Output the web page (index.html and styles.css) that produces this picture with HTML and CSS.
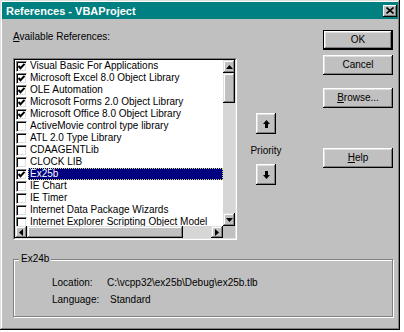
FILE: index.html
```html
<!DOCTYPE html>
<html lang="en">
<head>
    <meta charset="UTF-8">
    <title>References - VBAProject</title>
    <link rel="stylesheet" href="styles.css">
</head>
<body>
    <div class="window">
        <div class="titlebar">
            <span class="title">References - VBAProject</span>
            <button class="close">
                <svg width="8" height="7" viewBox="0 0 8 7"><path d="M0.5 0.5 L7.5 6.5 M7.5 0.5 L0.5 6.5" stroke="#000" stroke-width="1.6"/></svg>
            </button>
        </div>

        <div class="main">
            <div class="left">
                <div class="caption"><u>A</u>vailable References:</div>
                <div class="listbox">
                    <div class="listbox-inner">
                        <div class="items">
                            <div class="item"><span class="check on"></span><span class="label">Visual Basic For Applications</span></div>
                            <div class="item"><span class="check on"></span><span class="label">Microsoft Excel 8.0 Object Library</span></div>
                            <div class="item"><span class="check on"></span><span class="label">OLE Automation</span></div>
                            <div class="item"><span class="check on"></span><span class="label">Microsoft Forms 2.0 Object Library</span></div>
                            <div class="item"><span class="check on"></span><span class="label">Microsoft Office 8.0 Object Library</span></div>
                            <div class="item"><span class="check"></span><span class="label">ActiveMovie control type library</span></div>
                            <div class="item"><span class="check"></span><span class="label">ATL 2.0 Type Library</span></div>
                            <div class="item"><span class="check"></span><span class="label">CDAAGENTLib</span></div>
                            <div class="item"><span class="check"></span><span class="label">CLOCK LIB</span></div>
                            <div class="item selected"><span class="check on"></span><span class="label">Ex25b</span></div>
                            <div class="item"><span class="check"></span><span class="label">IE Chart</span></div>
                            <div class="item"><span class="check"></span><span class="label">IE Timer</span></div>
                            <div class="item"><span class="check"></span><span class="label">Internet Data Package Wizards</span></div>
                            <div class="item"><span class="check"></span><span class="label">Internet Explorer Scripting Object Model</span></div>
                        </div>
                        <div class="vscroll">
                            <div class="sbtn"><svg width="7" height="4" viewBox="0 0 7 4"><path d="M3.5 0 L7 4 L0 4 Z"/></svg></div>
                            <div class="thumb vthumb"></div>
                            <div class="trough"></div>
                            <div class="sbtn"><svg width="7" height="4" viewBox="0 0 7 4"><path d="M0 0 L7 0 L3.5 4 Z"/></svg></div>
                        </div>
                        <div class="hscroll">
                            <div class="sbtn"><svg width="4" height="7" viewBox="0 0 4 7"><path d="M4 0 L4 7 L0 3.5 Z"/></svg></div>
                            <div class="thumb hthumb"></div>
                            <div class="trough"></div>
                            <div class="sbtn"><svg width="4" height="7" viewBox="0 0 4 7"><path d="M0 0 L4 3.5 L0 7 Z"/></svg></div>
                        </div>
                        <div class="corner"></div>
                    </div>
                </div>
            </div>

            <div class="priority">
                <button class="btn arrow-btn">
                    <svg width="7" height="8" viewBox="0 0 7 8"><path d="M3.5 0 L7 4 L5 4 L5 8 L2 8 L2 4 L0 4 Z"/></svg>
                </button>
                <div class="priority-label">Priority</div>
                <button class="btn arrow-btn">
                    <svg width="7" height="8" viewBox="0 0 7 8"><path d="M2 0 L5 0 L5 4 L7 4 L3.5 8 L0 4 L2 4 Z"/></svg>
                </button>
            </div>

            <div class="buttons">
                <button class="btn default">OK</button>
                <button class="btn cancel">Cancel</button>
                <button class="btn browse"><u>B</u>rowse...</button>
                <button class="btn help"><u>H</u>elp</button>
            </div>
        </div>

        <fieldset class="group">
            <legend>Ex24b</legend>
            <div class="details">
                <span>Location:</span><span>C:\vcpp32\ex25b\Debug\ex25b.tlb</span>
                <span>Language:</span><span class="lang">Standard</span>
            </div>
        </fieldset>
    </div>
</body>
</html>
```

FILE: styles.css
```css
* {
    box-sizing: border-box;
}
body {
    margin: 0;
    background: #fff;
    font-family: 'Liberation Sans', Arial, sans-serif;
    font-size: 10px;
    line-height: 12px;
    color: #000;
}
.window {
    width: 400px;
    height: 330px;
    padding: 2px;
    background: #c0c0c0;
    box-shadow: inset -1px -1px #000, inset 1px 1px #dfdfdf, inset -2px -2px #808080, inset 2px 2px #fff;
}
.titlebar {
    height: 17px;
    background: #008080;
    display: flex;
    align-items: center;
    padding: 0 1px 0 4px;
}
.title {
    flex: 1;
    color: #fff;
    font-weight: bold;
    font-size: 11px;
}
.close {
    width: 14px;
    height: 12px;
    padding: 0;
    border: none;
    background: #c0c0c0;
    display: flex;
    align-items: center;
    justify-content: center;
    box-shadow: inset -1px -1px #000, inset 1px 1px #fff, inset -2px -2px #808080;
}
.main {
    display: flex;
    padding: 11px 5px 0 11px;
}
.left {
    width: 224px;
}
.caption {
    margin-top: 1px;
}
.listbox {
    margin-top: 15px;
    height: 182px;
    border: 1px solid;
    border-color: #808080 #fff #fff #808080;
}
.listbox-inner {
    height: 100%;
    border: 1px solid;
    border-color: #000 #dfdfdf #dfdfdf #000;
    display: grid;
    grid-template-columns: 208px 12px;
    grid-template-rows: 166px 12px;
}
.items {
    background: #fff;
    overflow: hidden;
}
.item {
    display: flex;
    align-items: center;
    height: 12px;
    white-space: nowrap;
}
.check {
    width: 11px;
    height: 11px;
    margin: 0 1px 0 1px;
    flex: none;
    background: #fff;
    border: 1px solid;
    border-color: #808080 #fff #fff #808080;
    box-shadow: inset 1px 1px #000, inset -1px -1px #dfdfdf;
}
.check.on {
    background: #fff url("data:image/svg+xml,%3Csvg xmlns='http://www.w3.org/2000/svg' width='9' height='9' viewBox='0 0 9 9'%3E%3Cpath d='M1.5 4 L3.5 6.2 L7.5 1.8' fill='none' stroke='%23000' stroke-width='2'/%3E%3C/svg%3E") center / 9px 9px no-repeat;
}
.label {
    flex: 1;
    padding-left: 2px;
    height: 12px;
}
.selected .label {
    background: #000080;
    color: #fff;
    outline: 1px dotted #d8d870;
    outline-offset: -1px;
}
.vscroll {
    display: flex;
    flex-direction: column;
}
.hscroll {
    display: flex;
}
.sbtn {
    width: 12px;
    height: 12px;
    flex: none;
    display: flex;
    align-items: center;
    justify-content: center;
    background: #c0c0c0;
    box-shadow: inset -1px -1px #000, inset 1px 1px #dfdfdf, inset -2px -2px #808080, inset 2px 2px #fff;
}
.vscroll .sbtn {
    height: 13px;
}
.thumb {
    flex: none;
    background: #c0c0c0;
    box-shadow: inset -1px -1px #000, inset 1px 1px #dfdfdf, inset -2px -2px #808080, inset 2px 2px #fff;
}
.vthumb {
    height: 30px;
}
.hthumb {
    width: 156px;
}
.trough {
    flex: 1;
    background: #d6d6d6;
}
.corner {
    background: #c0c0c0;
}
.priority {
    width: 40px;
    margin-left: 9px;
    padding-top: 83px;
    display: flex;
    flex-direction: column;
    align-items: center;
}
.priority-label {
    margin: 11px 0 7px;
}
.btn {
    font-family: inherit;
    font-size: 10px;
    line-height: 12px;
    color: #000;
    background: #c0c0c0;
    border: none;
    padding: 0;
    box-shadow: inset -1px -1px #000, inset 1px 1px #fff, inset -2px -2px #808080, inset 2px 2px #dfdfdf;
}
.arrow-btn {
    width: 20px;
    height: 21px;
    display: flex;
    align-items: center;
    justify-content: center;
}
.buttons {
    margin-left: 37px;
    width: 70px;
    display: flex;
    flex-direction: column;
}
.buttons .btn {
    height: 20px;
}
.btn.default {
    box-shadow: inset 0 0 0 1px #000, inset -2px -2px #000, inset 2px 2px #fff, inset -3px -3px #808080, inset 3px 3px #dfdfdf;
}
.btn.cancel {
    margin-top: 5px;
}
.btn.browse {
    margin-top: 13px;
}
.btn.help {
    margin-top: 40px;
}
.group {
    margin: 13px 0 0 11px;
    width: 380px;
    height: 64px;
    padding: 0;
    border: 1px solid #808080;
    box-shadow: inset 1px 1px #fff, 1px 1px #fff;
}
.group legend {
    margin-left: 5px;
    padding: 0 2px;
    background: #c0c0c0;
}
.details {
    display: grid;
    grid-template-columns: 55px auto;
    row-gap: 5px;
    padding: 12px 0 0 38px;
}
.lang {
    padding-left: 3px;
}
```
